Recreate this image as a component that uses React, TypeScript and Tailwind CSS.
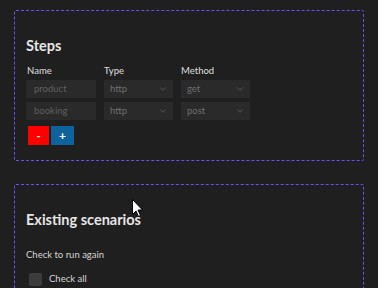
import { ChevronDown } from "lucide-react"

const steps = [
  { name: "product", type: "http", method: "get" },
  { name: "booking", type: "http", method: "post" },
]

function SelectBox({ value }: { value: string }) {
  return (
    <div className="w-[69px] h-[18px] bg-[#2a2a2a] flex items-center justify-between pl-[6px] pr-[5px] text-[9.5px] text-[#6e6e6e]">
      <span>{value}</span>
      <ChevronDown className="w-[10px] h-[10px] text-[#6e6e6e]" strokeWidth={1.5} />
    </div>
  )
}

export default function App() {
  return (
    <div
      className="relative h-[288px] bg-[#1f1f1f] px-[14px] pt-[10px] overflow-hidden"
      style={{ fontFamily: "Lato, 'Open Sans', sans-serif" }}
    >
      <section className="border border-dashed border-[#6a4ff5] rounded-[2px] pl-[11px] pr-3 pt-[25px] pb-[15px]">
        <h2 className="text-[14.5px] leading-[20px] font-bold text-[#e6e6e6]">Steps</h2>
        <div className="mt-[8px] flex gap-[8px] mb-[2px] text-[9.5px] font-medium leading-[14px] text-[#d4d4d4]">
          <div className="w-[70px] pl-[1px]">Name</div>
          <div className="w-[69px]">Type</div>
          <div className="w-[69px]">Method</div>
        </div>
        <div className="flex flex-col gap-[4px]">
          {steps.map((s) => (
            <div key={s.name} className="flex gap-[8px]">
              <div className="w-[70px] h-[18px] bg-[#2a2a2a] flex items-center pl-[8px] text-[9.5px] text-[#5f5f5f]">
                {s.name}
              </div>
              <SelectBox value={s.type} />
              <SelectBox value={s.method} />
            </div>
          ))}
        </div>
        <div className="mt-[6px] ml-[2px] flex gap-[2px]">
          <button className="w-[21px] h-[19px] bg-[#ff0000] text-white text-[11px] font-bold leading-none">-</button>
          <button className="w-[23px] h-[19px] bg-[#0e639c] text-white text-[12px] font-bold leading-none">+</button>
        </div>
      </section>

      <section className="mt-[23px] border border-dashed border-[#6a4ff5] rounded-[2px] pl-[11px] pr-3 pt-[25px] pb-6">
        <h2 className="text-[14.5px] leading-[20px] font-bold text-[#e6e6e6]">Existing scenarios</h2>
        <p className="mt-[18px] text-[9.5px] leading-[14px] text-[#d4d4d4]">Check to run again</p>
        <label className="mt-[10px] ml-[3px] flex items-center gap-[7px] text-[9.5px] leading-[14px] text-[#d4d4d4]">
          <span className="w-[13px] h-[13px] bg-[#3c3c3c] rounded-[2px]" />
          Check all
        </label>
      </section>

      <svg className="absolute left-[132px] top-[199px]" width="12" height="19" viewBox="0 0 12 19">
        <path d="M0.5 0.5 L0.5 15.5 L4 12 L6.5 17.5 L8.5 16.5 L6 11 L10.5 11 Z" fill="#ffffff" stroke="#000000" strokeWidth="1" />
      </svg>
    </div>
  )
}
